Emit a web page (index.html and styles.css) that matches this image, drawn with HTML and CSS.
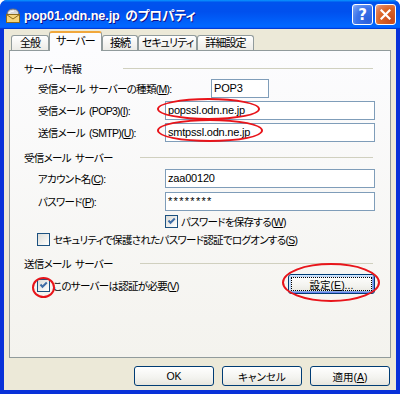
FILE: index.html
```html
<!DOCTYPE html>
<html lang="ja">
<head>
  <meta charset="UTF-8">
  <title>pop01.odn.ne.jp のプロパティ</title>
  <link rel="stylesheet" href="styles.css">
</head>
<body>
  <div class="window">
    <div class="titlebar">
      <svg class="title-icon" width="16" height="16" viewBox="0 0 16 16">
        <path d="M2 8 Q2 2 8 2 Q14 2 14 8 Z" fill="#d8d8d8" stroke="#6f6f6f"/>
        <path d="M4 6 Q6 4 9 4" fill="none" stroke="#fff"/>
        <rect x="1.5" y="7.5" width="13" height="8" fill="#f6d57a" stroke="#8a6a1c"/>
        <path d="M1.5 7.5 L8 12 L14.5 7.5" fill="none" stroke="#8a6a1c"/>
      </svg>
      <span class="title-text">pop01.odn.ne.jp のプロパティ</span>
      <div class="title-buttons">
        <span class="tb-btn tb-help">?</span>
        <span class="tb-btn tb-close">
          <svg width="11" height="11" viewBox="0 0 11 11">
            <path d="M1.5 1.5 L9.5 9.5 M9.5 1.5 L1.5 9.5" stroke="#fff" stroke-width="2.2" stroke-linecap="square"/>
          </svg>
        </span>
      </div>
    </div>

    <div class="client">
      <div class="tabs">
        <span class="tab tab-general">全般</span>
        <span class="tab tab-server active">サーバー</span>
        <span class="tab tab-connect">接続</span>
        <span class="tab tab-security">セキュリティ</span>
        <span class="tab tab-advanced">詳細設定</span>
      </div>

      <div class="panel">
        <div class="group-title first"><span>サーバー情報</span><i></i></div>
        <div class="row">
          <label class="wide">受信メール サーバーの種類(<u>M</u>):</label>
          <div class="field short">POP3</div>
        </div>
        <div class="row">
          <label>受信メール (POP3)(<u>I</u>):</label>
          <div class="field">popssl.odn.ne.jp</div>
        </div>
        <div class="row">
          <label>送信メール (SMTP)(<u>U</u>):</label>
          <div class="field">smtpssl.odn.ne.jp</div>
        </div>

        <div class="group-title"><span>受信メール サーバー</span><i></i></div>
        <div class="row gap-c">
          <label>アカウント名(<u>C</u>):</label>
          <div class="field">zaa00120</div>
        </div>
        <div class="row gap-p">
          <label>パスワード(<u>P</u>):</label>
          <div class="field secret">********</div>
        </div>
        <div class="check save-pass">
          <span class="box checked"></span>
          <span>パスワードを保存する(<u>W</u>)</span>
        </div>
        <div class="check spa">
          <span class="box"></span>
          <span>セキュリティで保護されたパスワード認証でログオンする(<u>S</u>)</span>
        </div>

        <div class="group-title last"><span>送信メール サーバー</span><i></i></div>
        <div class="row auth">
          <div class="check">
            <span class="box checked"></span>
            <span>このサーバーは認証が必要(<u>V</u>)</span>
          </div>
          <button class="btn focused">設定(<u>E</u>)...</button>
        </div>

        <span class="mark mark-pop"></span>
        <span class="mark mark-smtp"></span>
        <span class="mark mark-auth"></span>
        <span class="mark mark-settings"></span>
      </div>

      <div class="buttons">
        <button class="btn">OK</button>
        <button class="btn">キャンセル</button>
        <button class="btn">適用(<u>A</u>)</button>
      </div>
    </div>
  </div>
</body>
</html>
```

FILE: styles.css
```css
* { box-sizing: border-box; }
body {
  margin: 0;
  background: #fff;
  font-family: "Liberation Sans", "Noto Sans CJK JP", sans-serif;
  font-size: 10.5px;
  letter-spacing: -0.7px;
  word-spacing: 2px;
  font-feature-settings: "palt";
  color: #000;
}
u { text-decoration: underline; text-underline-offset: 1px; }

.window {
  width: 400px;
  height: 394px;
  background: #0831d9;
  border-radius: 7px 7px 0 0;
  display: flex;
  flex-direction: column;
  overflow: hidden;
}

/* title bar */
.titlebar {
  height: 29px;
  display: flex;
  align-items: center;
  padding: 0 4px 0 5px;
  background: linear-gradient(180deg, #0997ff, #0053ee 8%, #0050ee 40%, #06f 88%, #06f 93%, #005bff 95%, #003dd7 96%, #003dd7);
}
.title-icon { flex: none; margin-top: 1px; }
.title-text {
  margin-left: 3px;
  color: #fff;
  font-weight: bold;
  font-size: 12.7px;
  letter-spacing: -0.1px;
  text-shadow: 1px 1px #0f1089;
}
.title-buttons {
  margin-left: auto;
  display: flex;
  gap: 2px;
}
.tb-btn {
  width: 21px;
  height: 21px;
  border: 1px solid #fff;
  border-radius: 3px;
  display: flex;
  align-items: center;
  justify-content: center;
}
.tb-help {
  background: radial-gradient(circle at 80% 80%, #2a5fdc 0%, #3d74ea 55%, #6e99f2 85%, #a8c2f8 100%);
  color: #fff;
  font: bold 15px "DejaVu Sans", sans-serif;
  letter-spacing: 0;
}
.tb-close {
  background: radial-gradient(circle at 80% 80%, #c94a1c 0%, #dc6527 55%, #e0805a 80%, #f2b69c 100%);
}

/* client area */
.client {
  flex: 1;
  margin: 0 4px 4px;
  background: #ece9d8;
  display: flex;
  flex-direction: column;
}
.tabs {
  height: 21px;
  display: flex;
  align-items: flex-end;
  padding-left: 7px;
}
.tab {
  height: 15px;
  display: flex;
  justify-content: center;
  border: 1px solid #919b9c;
  border-bottom: none;
  border-radius: 3px 3px 0 0;
  background: linear-gradient(#fff, #ecebe6);
  line-height: 14px;
  font-size: 11px;
  letter-spacing: -0.9px;
  white-space: nowrap;
}
.tab-general { width: 38px; }
.tab-server { width: 53px; }
.tab-connect { width: 36px; }
.tab-security { width: 59px; }
.tab-advanced { width: 57px; }
.tab.active {
  height: 20px;
  margin-bottom: -1px;
  background: #fcfcfe;
  border-top: 2px solid #f1a73b;
  position: relative;
  z-index: 1;
  line-height: 16px;
}

.panel {
  position: relative;
  height: 308px;
  margin: 0 5px;
  padding: 0 15px 0 14px;
  border: 1px solid #919b9c;
  background: linear-gradient(#fcfcfe, #f4f3ee);
  display: flex;
  flex-direction: column;
}

.group-title {
  height: 14px;
  margin-top: 8px;
  display: flex;
  align-items: center;
}
.group-title.first { margin-top: 10px; }
.group-title.last { margin-top: 10px; }
.group-title span { width: 116px; }
.group-title.first span { width: 99px; }
.group-title i {
  flex: 1;
  height: 1px;
  margin-right: 2px;
  background: #d0d0bf;
}

.row {
  height: 19px;
  margin-top: 3px;
  padding-left: 14px;
  display: flex;
  align-items: center;
}
.group-title + .row { margin-top: 4px; }
.row.gap-c { margin-top: 5px; }
.row.gap-p { margin-top: 4px; }
.row label { width: 127px; flex: none; }
.row label.wide { width: 173px; }

.field {
  flex: 1;
  height: 19px;
  padding: 0 2px;
  border: 1px solid #7f9db9;
  background: #fff;
  font-size: 11px;
  letter-spacing: -0.2px;
  line-height: 17px;
  white-space: nowrap;
}
.field.short { flex: none; width: 58px; }
.field.secret { letter-spacing: 1.3px; }

.check {
  height: 13px;
  display: flex;
  align-items: center;
  gap: 3px;
}
.check.save-pass { margin: 4px 0 0 141px; }
.check.spa { margin: 5px 0 0 13px; }
.box {
  width: 13px;
  height: 13px;
  flex: none;
  border: 1px solid #1c5180;
  background: linear-gradient(135deg, #dcdcd7, #fff);
}
.box.checked {
  background:
    url("data:image/svg+xml,%3Csvg xmlns='http://www.w3.org/2000/svg' width='11' height='11'%3E%3Cpath d='M2.5 4.5 L4.5 6.8 L8.8 2.5' fill='none' stroke='%233f6da6' stroke-width='2'/%3E%3C/svg%3E") center no-repeat,
    linear-gradient(135deg, #dcdcd7, #fff);
}

.row.auth {
  height: 20px;
  margin-top: 5px;
  padding-left: 13px;
  justify-content: space-between;
}

.btn {
  height: 20px;
  padding: 0;
  border: 1px solid #003c74;
  border-radius: 3px;
  background: linear-gradient(#fff, #f3f3ef 60%, #e6e5dd);
  font: inherit;
  color: #000;
}
.btn.focused {
  width: 87px;
  margin-top: -2px;
  box-shadow: inset 1px 1px 0 #cee7ff, inset -1px -1px 0 #6982ee, inset 2px 2px 0 #bcd4f6, inset -2px -2px 0 #89ade4;
  outline: 1px dotted #000;
  outline-offset: -4px;
}

.buttons {
  display: flex;
  justify-content: flex-end;
  gap: 8px;
  margin-top: 8px;
  padding-right: 6px;
}
.buttons .btn { width: 80px; }

/* red hand-drawn marks */
.mark {
  position: absolute;
  border: 2px solid #e8141a;
  border-radius: 50%;
}
.mark-pop { left: 147px; top: 47px; width: 103px; height: 22px; }
.mark-smtp { left: 147px; top: 68px; width: 106px; height: 23px; }
.mark-auth { left: 22px; top: 226px; width: 23px; height: 21px; }
.mark-settings { left: 272px; top: 212px; width: 98px; height: 39px; }
```
